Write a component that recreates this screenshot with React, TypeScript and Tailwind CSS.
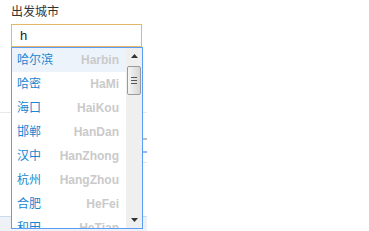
import React from 'react';

const cities = [
  { cn: '哈尔滨', py: 'Harbin' },
  { cn: '哈密', py: 'HaMi' },
  { cn: '海口', py: 'HaiKou' },
  { cn: '邯郸', py: 'HanDan' },
  { cn: '汉中', py: 'HanZhong' },
  { cn: '杭州', py: 'HangZhou' },
  { cn: '合肥', py: 'HeFei' },
  { cn: '和田', py: 'HeTian' },
];

const font = { fontFamily: '"Liberation Sans", "Noto Sans CJK SC", sans-serif' };

const Arrow = ({ up }: { up?: boolean }) => (
  <svg width="7" height="4" viewBox="0 0 7 4">
    <polygon points={up ? '0,4 7,4 3.5,0' : '0,0 7,0 3.5,4'} fill="#333" />
  </svg>
);

export default function App() {
  return (
    <div className="relative w-[369px] h-[231px] bg-white overflow-hidden text-[#333]" style={font}>
      {/* form */}
      <div className="pl-[11px] pt-[4px]">
        <div className="text-[12px] leading-[16px]">出发城市</div>
        <div className="relative w-[131px] mt-[4px]">
          <div className="h-[23px] border border-[#e2b86a] bg-white pl-[8px] text-[13px] leading-[21px] text-[#222]">
            h
          </div>

          {/* suggestion dropdown */}
          <div className="absolute top-[23px] left-0 z-10 w-[132px] h-[182px] border border-[#5b9cf4] bg-white flex">
            <div className="flex-1 overflow-hidden">
              {cities.map((c, i) => (
                <div
                  key={c.py}
                  className={`h-[24px] flex items-center justify-between pl-[5px] pr-[7px] ${i === 0 ? 'bg-[#edf3fb]' : ''}`}
                >
                  <span className="text-[12px] text-[#1a86d0]">{c.cn}</span>
                  <span className="text-[12px] font-bold text-[#cacaca]">{c.py}</span>
                </div>
              ))}
            </div>
            {/* scrollbar */}
            <div className="w-[16px] bg-[#efefef] flex flex-col items-center">
              <div className="h-[16px] flex items-center justify-center">
                <Arrow up />
              </div>
              <div className="mt-[2px] w-[14px] h-[29px] rounded-[2px] border border-[#9a9a9a] bg-gradient-to-r from-[#f6f6f6] to-[#d6d6d6] flex flex-col items-center justify-center gap-[2px]">
                <div className="w-[6px] h-px bg-[#555]" />
                <div className="w-[6px] h-px bg-[#555]" />
                <div className="w-[6px] h-px bg-[#555]" />
              </div>
              <div className="flex-1" />
              <div className="h-[16px] flex items-center justify-center">
                <Arrow />
              </div>
            </div>
          </div>
        </div>
      </div>

      {/* page content behind the dropdown */}
      <div className="w-[147px] mt-[65px]">
        <div className="h-px bg-[#e8e8e8]" />
        <div className="mt-[25px] ml-[120px] w-[27px] h-[2px] bg-[#bdbdbd]" />
        <div className="mt-[11px] ml-[140px] w-[7px] h-[2px] bg-[#8fb8f5]" />
        <div className="mt-[9px] ml-[120px] w-[27px] h-px bg-[#e2e2e2]" />
        <div className="mt-[53px] h-[16px] border-t border-[#c8dcf0] bg-[#eef2f7]" />
      </div>
    </div>
  );
}
